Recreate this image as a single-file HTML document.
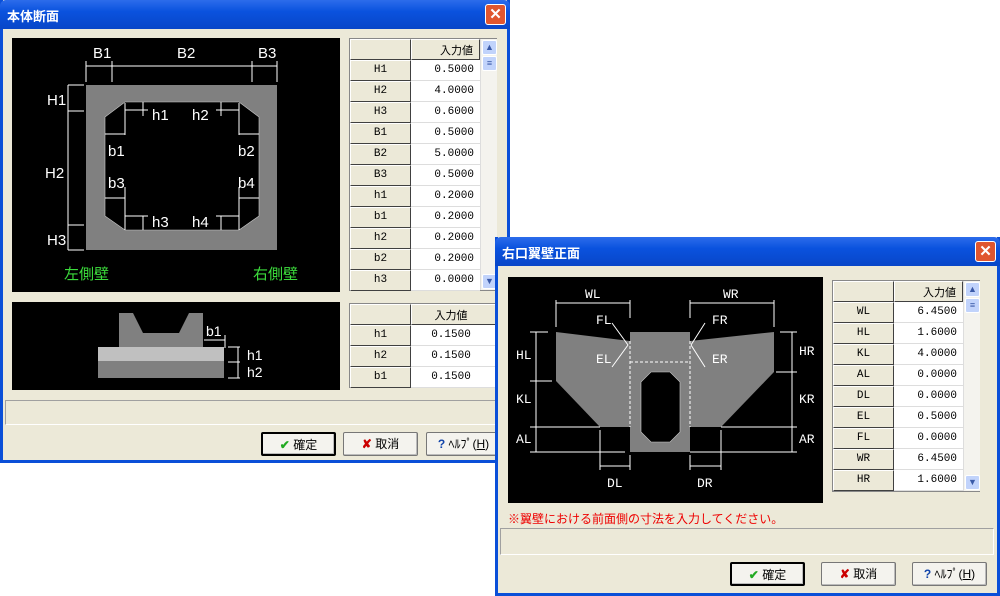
<!DOCTYPE html><html><head><meta charset="utf-8"><style>
*{margin:0;padding:0;box-sizing:border-box}
body{width:1000px;height:596px;background:#fff;position:relative;overflow:hidden;font-family:"Liberation Sans","Noto Sans CJK JP",sans-serif;font-size:12px}
.win{position:absolute;background:#ECE9D8;border:3px solid #0A4FD8;border-top:none}
.title{position:absolute;left:-3px;right:-3px;top:0;height:29px;background:linear-gradient(#2C6CEB,#0A52DE 40%,#0846C8);color:#fff;font-weight:bold;font-size:13px;padding:6px 0 0 7px;border-radius:6px 6px 0 0}
.x{position:absolute;right:4px;top:4px;width:21px;height:21px;background:#E0562F;border:1px solid #fff;border-radius:3px;color:#fff;font-size:15px;text-align:center;line-height:19px;font-weight:bold}
.abs{position:absolute}
.tbl{position:absolute;background:#fff;border:1px solid #888}
.row{position:absolute;left:0;height:21px;width:100%}
.lab{position:absolute;left:0;width:61px;height:21px;background:#ECE9D8;border:1px solid;border-color:#fff #404040 #404040 #fff;text-align:center;font-size:11px;line-height:19px;font-family:"Liberation Mono","Noto Sans CJK JP",monospace}
.val{position:absolute;left:61px;height:21px;border-bottom:1px solid #ddd;text-align:right;padding-right:6px;font-size:11px;line-height:20px;font-family:"Liberation Mono",monospace;background:#fff}
.sb{position:absolute;background:#F4F3EE;border-left:1px solid #ddd}
.sbb{position:absolute;left:1px;width:15px;height:15px;background:#C1D3FB;border:1px solid #fff;border-radius:2px;color:#3A5AA8;font-size:9px;text-align:center;line-height:13px}
.status{position:absolute;border:1px solid;border-color:#A0A0A0 #fff #fff #A0A0A0;background:#ECE9D8}
.btn{position:absolute;height:24px;background:#F4F3EE;border:1px solid #777;border-radius:2px;font-size:12px;text-align:center;line-height:22px;box-shadow:inset -1px -1px #bbb}
.def{border:2px solid #000}
</style></head><body>

<!-- Window 1 -->
<div class="win" style="left:0;top:0;width:510px;height:463px">
<div class="title">本体断面<div class="x">✕</div></div>
<svg class="abs" style="left:9px;top:38px" width="332" height="255" viewBox="12 38 332 255">
<rect x="12" y="38" width="328" height="254" fill="#000"/>
<rect x="86" y="85" width="191" height="165" fill="#808080"/>
<polygon points="125,102 239,102 259,117 259,216 239,230 125,230 105,216 105,117" fill="#000" stroke="#ccc" stroke-width="0.6"/>
<g stroke="#fff" stroke-width="1" fill="none">
<path d="M86,82V61M112,82V61M252,82V61M277,82V61M86,66H277"/>
<path d="M68,85H84M68,111H84M68,225H84M68,250H84M68,85V250"/>
<path d="M125,110H148M105,134H125M239,110H216M239,134H259M125,103V135M239,103V135M105,198H125M239,198H259M125,187V230M239,187V230M125,216H148M239,216H216M143,102V116M221,102V116M143,216V230M221,216V230"/>
</g>
<g fill="#fff" font-family="Liberation Sans,sans-serif" font-size="15">
<text x="93" y="58">B1</text><text x="177" y="58">B2</text><text x="258" y="58">B3</text>
<text x="47" y="105">H1</text><text x="45" y="178">H2</text><text x="47" y="245">H3</text>
<text x="152" y="120">h1</text><text x="192" y="120">h2</text>
<text x="108" y="156">b1</text><text x="238" y="156">b2</text>
<text x="108" y="188">b3</text><text x="238" y="188">b4</text>
<text x="152" y="227">h3</text><text x="192" y="227">h4</text>
</g>
<text x="64" y="279" fill="#3CDC3C" font-size="15" font-family="Noto Sans CJK JP,sans-serif">左側壁</text>
<text x="253" y="279" fill="#3CDC3C" font-size="15" font-family="Noto Sans CJK JP,sans-serif">右側壁</text>
</svg>
<div class="tbl" style="left:346px;top:38px;width:148px;height:253px">
<div class="row" style="top:0"><div class="lab"></div><div class="val" style="width:69px;background:#ECE9D8;font-family:'Noto Sans CJK JP';text-align:right;border:1px solid;border-color:#fff #404040 #404040 #fff">入力値</div></div>
<div class="row" style="top:21px"><div class="lab">H1</div><div class="val" style="width:69px">0.5000</div></div>
<div class="row" style="top:42px"><div class="lab">H2</div><div class="val" style="width:69px">4.0000</div></div>
<div class="row" style="top:63px"><div class="lab">H3</div><div class="val" style="width:69px">0.6000</div></div>
<div class="row" style="top:84px"><div class="lab">B1</div><div class="val" style="width:69px">0.5000</div></div>
<div class="row" style="top:105px"><div class="lab">B2</div><div class="val" style="width:69px">5.0000</div></div>
<div class="row" style="top:126px"><div class="lab">B3</div><div class="val" style="width:69px">0.5000</div></div>
<div class="row" style="top:147px"><div class="lab">h1</div><div class="val" style="width:69px">0.2000</div></div>
<div class="row" style="top:168px"><div class="lab">b1</div><div class="val" style="width:69px">0.2000</div></div>
<div class="row" style="top:189px"><div class="lab">h2</div><div class="val" style="width:69px">0.2000</div></div>
<div class="row" style="top:210px"><div class="lab">b2</div><div class="val" style="width:69px">0.2000</div></div>
<div class="row" style="top:231px"><div class="lab">h3</div><div class="val" style="width:69px">0.0000</div></div>
<div class="sb" style="left:130px;top:0;width:17px;height:251px"><div class="sbb" style="top:1px">▲</div><div class="sbb" style="top:17px">≡</div><div class="sbb" style="top:235px">▼</div></div>
</div>
<svg class="abs" style="left:9px;top:302px" width="332" height="90" viewBox="12 302 332 90">
<rect x="12" y="302" width="328" height="88" fill="#000"/>
<polygon points="119,313 133,313 143,333 179,333 189,313 203,313 203,347 119,347" fill="#808080"/>
<rect x="98" y="347" width="126" height="14" fill="#C0C0C0"/>
<rect x="98" y="361" width="126" height="17" fill="#808080"/>
<g stroke="#fff" fill="none"><path d="M204,340H225M225,335V348M228,347H240M228,362H240M228,378H240M238,347V378"/></g>
<g fill="#fff" font-size="14"><text x="206" y="336">b1</text><text x="247" y="360">h1</text><text x="247" y="377">h2</text></g>
</svg>
<div class="tbl" style="left:346px;top:303px;width:148px;height:85px;border-right:none">
<div class="row" style="top:0"><div class="lab"></div><div class="val" style="width:86px;background:#ECE9D8;font-family:'Noto Sans CJK JP';text-align:center;border:1px solid;border-color:#fff #404040 #404040 #fff">入力値</div></div>
<div class="row" style="top:21px"><div class="lab">h1</div><div class="val" style="width:86px;text-align:center">0.1500</div></div>
<div class="row" style="top:42px"><div class="lab">h2</div><div class="val" style="width:86px;text-align:center">0.1500</div></div>
<div class="row" style="top:63px"><div class="lab">b1</div><div class="val" style="width:86px;text-align:center">0.1500</div></div>
</div>
<div class="status" style="left:2px;top:400px;width:493px;height:25px"></div>
<div class="btn def" style="left:258px;top:432px;width:75px"><span style="color:#2a2;font-weight:bold">✔</span> 確定</div>
<div class="btn" style="left:340px;top:432px;width:75px"><span style="color:#c00;font-weight:bold">✘</span> 取消</div>
<div class="btn" style="left:423px;top:432px;width:75px"><span style="color:#14a;font-weight:bold">?</span> ﾍﾙﾌﾟ(<u>H</u>)</div>
</div>

<!-- Window 2 -->
<div class="win" style="left:495px;top:237px;width:505px;height:359px;border-bottom:3px solid #0A4FD8">
<div class="title">右口翼壁正面<div class="x">✕</div></div>
<svg class="abs" style="left:10px;top:40px" width="316" height="227" viewBox="508 277 316 227">
<rect x="508" y="277" width="315" height="226" fill="#000"/>
<polygon points="556,332 630,341 630,427 600,427 556,381" fill="#808080"/>
<polygon points="690,341 774,332 774,372 721,427 690,427" fill="#808080"/>
<rect x="630" y="332" width="60" height="120" fill="#808080"/>
<polygon points="651,372 670,372 680,382 680,432 670,442 651,442 641,432 641,382" fill="#000" stroke="#ccc" stroke-width="0.6"/>
<g stroke="#fff" fill="none">
<path d="M630,362H690M630,341V427M690,341V427" stroke-dasharray="3,2"/>
<path d="M556,327V300M630,318V300M556,303H630M690,318V300M774,327V300M690,303H774"/>
<path d="M530,332H548M530,381H552M530,427H600M530,452H625M536,332V452"/>
<path d="M780,332H797M776,372H797M721,427H797M690,452H797M792,332V452"/>
<path d="M600,430V470M630,455V470M600,466H630M690,455V470M721,430V470M690,466H721"/>
<path d="M612,323L628,345M612,367L628,345M705,323L691,345M705,367L691,345"/>
</g>
<g fill="#fff" font-size="13" font-family="Liberation Mono,monospace">
<text x="585" y="298">WL</text><text x="723" y="298">WR</text>
<text x="596" y="324">FL</text><text x="712" y="324">FR</text>
<text x="596" y="363">EL</text><text x="712" y="363">ER</text>
<text x="516" y="359">HL</text><text x="516" y="403">KL</text><text x="516" y="443">AL</text>
<text x="799" y="355">HR</text><text x="799" y="403">KR</text><text x="799" y="443">AR</text>
<text x="607" y="487">DL</text><text x="697" y="487">DR</text>
</g>
</svg>
<div class="abs" style="left:10px;top:273px;color:#E00;font-size:12px;font-family:'Noto Sans CJK JP',sans-serif">※翼壁における前面側の寸法を入力してください。</div>
<div class="tbl" style="left:334px;top:43px;width:148px;height:212px">
<div class="row" style="top:0"><div class="lab"></div><div class="val" style="width:69px;background:#ECE9D8;font-family:'Noto Sans CJK JP';border:1px solid;border-color:#fff #404040 #404040 #fff">入力値</div></div>
<div class="row" style="top:21px"><div class="lab">WL</div><div class="val" style="width:69px">6.4500</div></div>
<div class="row" style="top:42px"><div class="lab">HL</div><div class="val" style="width:69px">1.6000</div></div>
<div class="row" style="top:63px"><div class="lab">KL</div><div class="val" style="width:69px">4.0000</div></div>
<div class="row" style="top:84px"><div class="lab">AL</div><div class="val" style="width:69px">0.0000</div></div>
<div class="row" style="top:105px"><div class="lab">DL</div><div class="val" style="width:69px">0.0000</div></div>
<div class="row" style="top:126px"><div class="lab">EL</div><div class="val" style="width:69px">0.5000</div></div>
<div class="row" style="top:147px"><div class="lab">FL</div><div class="val" style="width:69px">0.0000</div></div>
<div class="row" style="top:168px"><div class="lab">WR</div><div class="val" style="width:69px">6.4500</div></div>
<div class="row" style="top:189px"><div class="lab">HR</div><div class="val" style="width:69px">1.6000</div></div>
<div class="sb" style="left:130px;top:0;width:17px;height:210px"><div class="sbb" style="top:1px">▲</div><div class="sbb" style="top:17px">≡</div><div class="sbb" style="top:194px">▼</div></div>
</div>
<div class="status" style="left:2px;top:291px;width:494px;height:27px"></div>
<div class="btn def" style="left:232px;top:325px;width:75px"><span style="color:#2a2;font-weight:bold">✔</span> 確定</div>
<div class="btn" style="left:323px;top:325px;width:75px"><span style="color:#c00;font-weight:bold">✘</span> 取消</div>
<div class="btn" style="left:414px;top:325px;width:75px"><span style="color:#14a;font-weight:bold">?</span> ﾍﾙﾌﾟ(<u>H</u>)</div>
</div>
</body></html>
